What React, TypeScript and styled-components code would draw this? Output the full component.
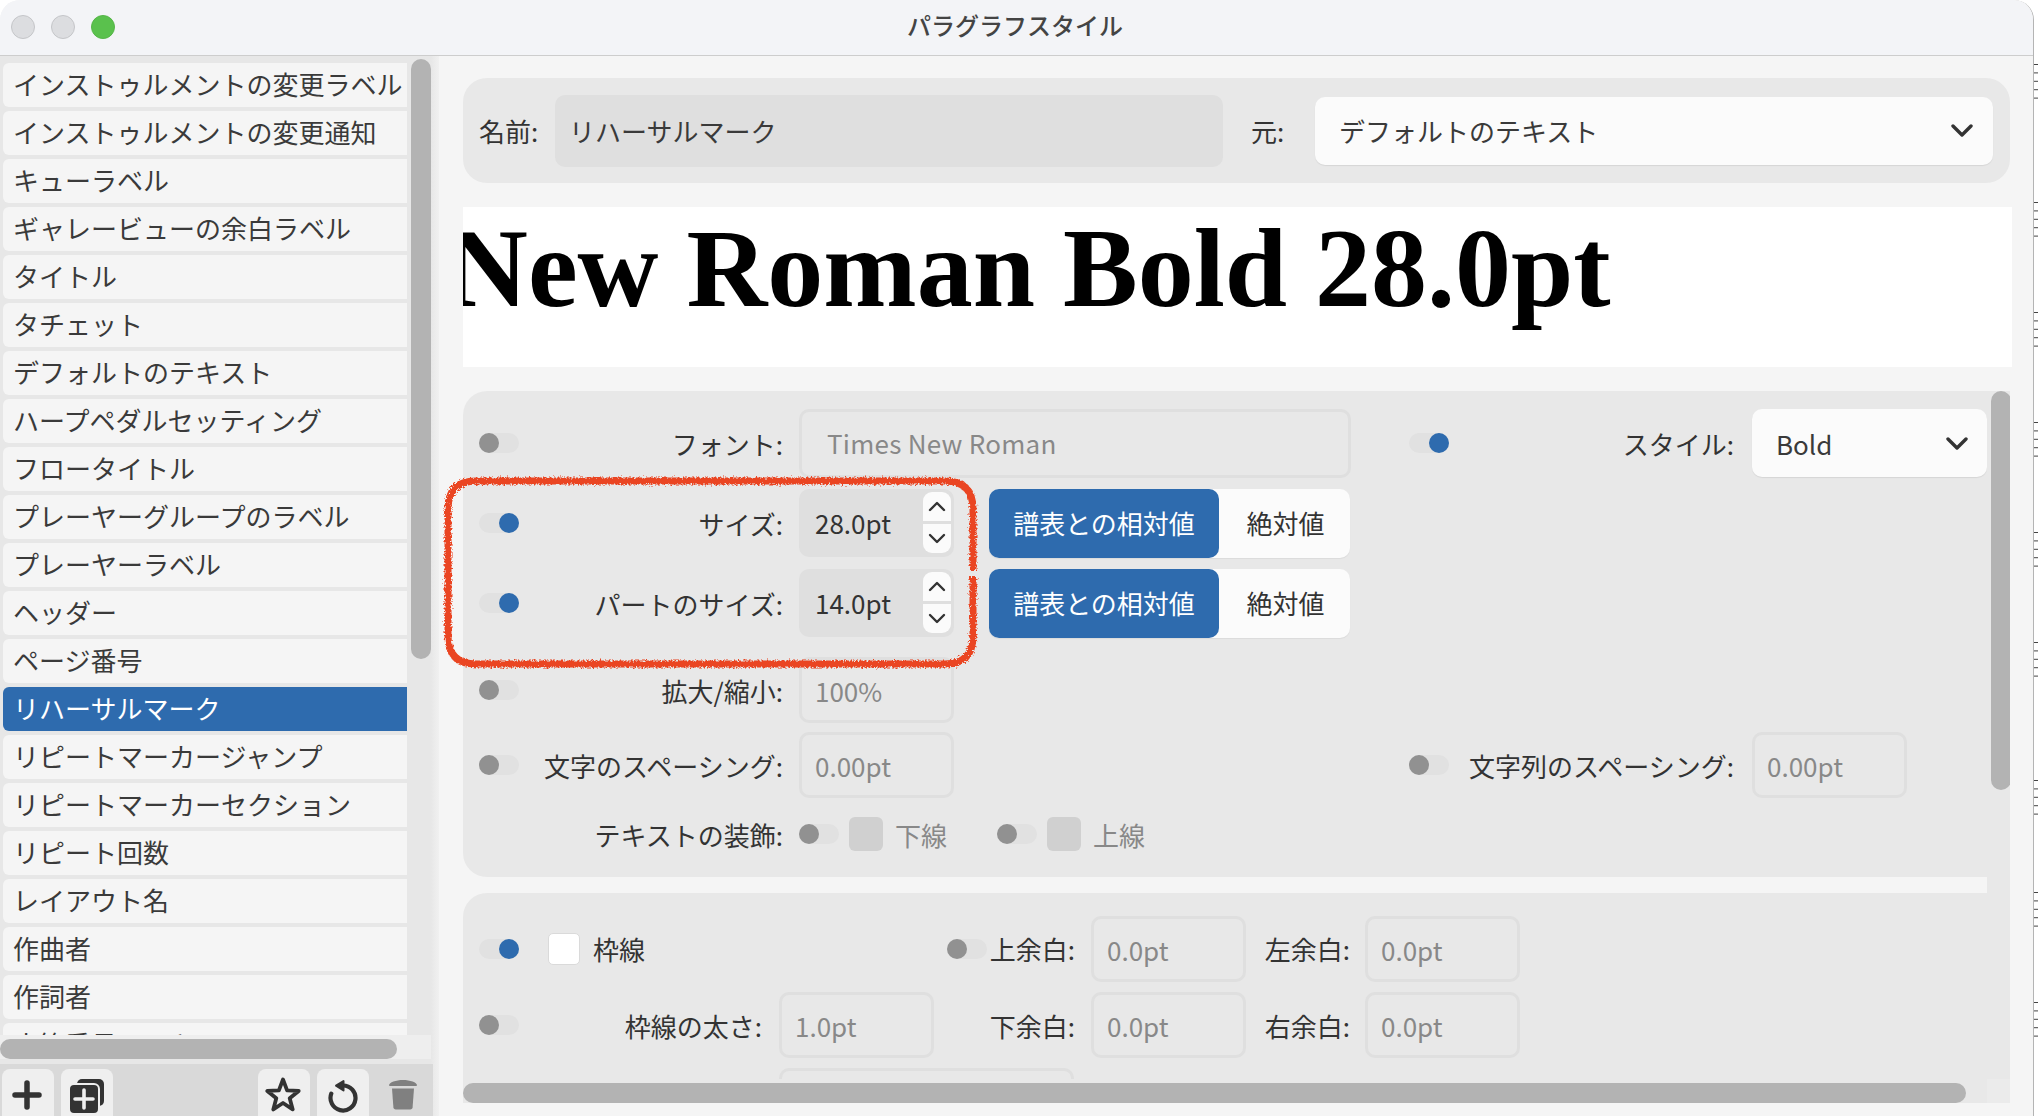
import React from "react";
import styled, { createGlobalStyle } from "styled-components";

const Global = createGlobalStyle`
  html, body { margin: 0; padding: 0; background: #fff; }
  body { font-family: "Noto Sans CJK JP", "Noto Sans", sans-serif; color: #333; }
  * { box-sizing: border-box; }
`;

const Page = styled.div`
  display: flex;
  width: 2038px;
  height: 1116px;
  overflow: hidden;
`;
const Win = styled.div`
  width: 2034px;
  height: 1116px;
  display: flex;
  flex-direction: column;
  border-radius: 20px 20px 0 0;
  border-right: 1px solid #b4b4b4;
  overflow: hidden;
  background: #f5f5f5;
`;
const StaffEdge = styled.svg`
  width: 4px;
  height: 1116px;
  flex: none;
`;
const TitleBar = styled.header`
  flex: none;
  height: 56px;
  display: grid;
  grid-template-columns: 1fr auto 1fr;
  align-items: center;
  padding: 0 0 2px 11px;
  background: #f3f4f7;
  border-bottom: 1px solid #cdcdcd;
`;
const Lights = styled.div`
  display: flex;
  gap: 16px;
`;
const Light = styled.span<{ $on?: boolean }>`
  width: 24px;
  height: 24px;
  border-radius: 50%;
  background: ${(p) => (p.$on ? "#5ac14d" : "#dcdde0")};
  border: 1px solid ${(p) => (p.$on ? "#55b548" : "#c4c5c8")};
`;
const Title = styled.h1`
  margin: 0;
  font-size: 24px;
  font-weight: 500;
  line-height: 30px;
  color: #444;
  transform: translate(-7px, -2px);
`;
const Body = styled.div`
  flex: 1;
  min-height: 0;
  display: flex;
  position: relative;
`;
const Sidebar = styled.aside`
  flex: none;
  width: 439px;
  display: flex;
  flex-direction: column;
  background: linear-gradient(90deg, #e7e7e7 0, #e7e7e7 431px, #ececec 435px, #f0f0f0 439px);
`;
const ListPane = styled.div`
  flex: none;
  height: 979px;
  width: 431px;
  display: flex;
  overflow: hidden;
`;
const List = styled.ul`
  list-style: none;
  margin: 0;
  padding: 7px 0 0 3px;
  width: 407px;
  flex: none;
  overflow: hidden;
`;
const Item = styled.li<{ $active?: boolean }>`
  height: 44px;
  margin-bottom: 4px;
  padding-left: 10px;
  border-radius: 6px 0 0 6px;
  font-size: 26px;
  line-height: 42px;
  white-space: nowrap;
  color: ${(p) => (p.$active ? "#fff" : "#3a3a3a")};
  background: ${(p) => (p.$active ? "#2e6bae" : "#f5f5f5")};
`;
const VTrack = styled.div<{ $top: number; $width: number }>`
  flex: none;
  width: ${(p) => p.$width}px;
  padding-top: ${(p) => p.$top}px;
  margin-left: 4px;
`;
const VThumb = styled.div<{ $height: number }>`
  width: 20px;
  height: ${(p) => p.$height}px;
  border-radius: 10px;
  background: #b3b3b3;
`;
const HTrack = styled.div`
  flex: none;
  width: 431px;
  height: 24px;
  padding-top: 4px;
  background: #eeeeee;
`;
const HThumb = styled.div<{ $width: number }>`
  width: ${(p) => p.$width}px;
  height: 20px;
  border-radius: 10px;
  background: #b3b3b3;
`;
const Toolbar = styled.div`
  flex: none;
  margin-top: 5px;
  height: 52px;
  width: 433px;
  padding: 5px 5px 0 2px;
  display: flex;
  gap: 7px;
  background: #d9d9d9;
`;
const ToolButton = styled.button<{ $bare?: boolean; $dx?: number }>`
  width: 52px;
  height: 47px;
  padding: 8px ${(p) => Math.max(0, -(p.$dx ?? 0))}px 0 ${(p) => Math.max(0, p.$dx ?? 0)}px;
  margin: 0;
  border: 0;
  display: flex;
  justify-content: center;
  border-radius: 8px 8px 0 0;
  background: ${(p) => (p.$bare ? "transparent" : "#efefef")};
  color: ${(p) => (p.$bare ? "#808080" : "#333")};
`;
const Spacer = styled.div`
  flex: 1;
`;
const Main = styled.main`
  flex: 1;
  min-width: 0;
  display: flex;
  flex-direction: column;
  padding: 22px 23px 13px 24px;
  background: #f5f5f5;
`;
const HeadPanel = styled.section`
  flex: none;
  height: 105px;
  display: flex;
  align-items: center;
  padding: 0 17px 0 16px;
  border-radius: 24px;
  background: #e8e8e8;
  font-size: 26px;
`;
const HeadLabel = styled.span<{ $width: number; $inset?: number }>`
  flex: none;
  width: ${(p) => p.$width}px;
  padding-left: ${(p) => p.$inset ?? 0}px;
  white-space: nowrap;
`;
const NameField = styled.div`
  flex: none;
  width: 668px;
  height: 72px;
  padding-left: 14px;
  border-radius: 10px;
  background: #dfdfdf;
  line-height: 72px;
  color: #3a3a3a;
`;
const Select = styled.div<{ $width?: number; $height: number; $pad: number; $right: number }>`
  flex: ${(p) => (p.$width ? "none" : "1")};
  ${(p) => (p.$width ? `width: ${p.$width}px;` : "")}
  height: ${(p) => p.$height}px;
  display: flex;
  align-items: center;
  justify-content: space-between;
  padding: 0 ${(p) => p.$right}px 0 ${(p) => p.$pad}px;
  border-radius: 10px;
  background: #fbfbfb;
  box-shadow: 0 1px 1px rgba(0, 0, 0, 0.08);
  font-size: 26px;
  color: #3a3a3a;
`;
const Preview = styled.div`
  flex: none;
  width: 1549px;
  height: 160px;
  margin-top: 24px;
  overflow: hidden;
  background: #fff;
`;
const PreviewText = styled.div`
  margin-left: -16px;
  font-family: "Liberation Serif", serif;
  font-weight: 700;
  font-size: 112px;
  line-height: 122px;
  color: #000;
  white-space: nowrap;
`;
const ScrollArea = styled.div`
  flex: 1;
  min-height: 0;
  margin-top: 24px;
  display: grid;
  grid-template-columns: 1524px 24px;
  grid-template-rows: 688px 24px;
  background: #e8e8e8;
  border-radius: 24px 0 0 0;
  overflow: hidden;
`;
const Viewport = styled.div`
  overflow: hidden;
  background: #f5f5f5;
`;
const Panel = styled.section<{ $radius: string; $pad: string; $mb?: number }>`
  background: #e8e8e8;
  border-radius: ${(p) => p.$radius};
  padding: ${(p) => p.$pad};
  margin-bottom: ${(p) => p.$mb ?? 0}px;
  font-size: 26px;
`;
const FontRow = styled.div<{ $height: number; $gap?: number }>`
  display: grid;
  grid-template-columns: 40px 264px 626px 40px 285px 1fr;
  align-items: center;
  height: ${(p) => p.$height}px;
  margin-top: ${(p) => p.$gap ?? 0}px;
`;
const BoxRow = styled.div<{ $height: number; $gap?: number }>`
  display: grid;
  grid-template-columns: 40px 243px 172px 13px 40px 88px 171px 104px 170px;
  align-items: center;
  height: ${(p) => p.$height}px;
  margin-top: ${(p) => p.$gap ?? 0}px;
`;
const Slot = styled.div``;
const Label = styled.label`
  text-align: right;
  white-space: nowrap;
  color: #333;
`;
const Cell = styled.div<{ $inset: number; $span?: string }>`
  display: flex;
  align-items: center;
  padding-left: ${(p) => p.$inset}px;
  ${(p) => (p.$span ? `grid-column: ${p.$span};` : "")}
`;
const Track = styled.span`
  display: block;
  position: relative;
  flex: none;
  width: 40px;
  height: 20px;
  border-radius: 10px;
  background: #e1e1e1;
`;
const Thumb = styled.span<{ $on?: boolean }>`
  position: absolute;
  top: 0;
  left: ${(p) => (p.$on ? "20px" : "0")};
  width: 20px;
  height: 20px;
  border-radius: 50%;
  background: ${(p) => (p.$on ? "#2e6bae" : "#919191")};
`;
const DisabledInput = styled.div<{ $width: number; $height?: number; $pad?: number; $track?: number }>`
  flex: none;
  width: ${(p) => p.$width}px;
  height: ${(p) => p.$height ?? 66}px;
  padding-left: ${(p) => p.$pad ?? 13}px;
  border: 3px solid #dfdfdf;
  border-radius: 10px;
  font-size: 26px;
  line-height: 62px;
  letter-spacing: ${(p) => p.$track ?? 0}px;
  color: #888;
  white-space: nowrap;
`;
const Spin = styled.div`
  flex: none;
  position: relative;
  width: 155px;
  height: 68px;
  padding-left: 16px;
  border-radius: 10px;
  background: #dfdfdf;
  line-height: 68px;
  color: #333;
`;
const SpinButtons = styled.div`
  position: absolute;
  top: 3px;
  left: 124px;
  width: 28px;
  display: flex;
  flex-direction: column;
  gap: 3px;
`;
const SpinButton = styled.span<{ $down?: boolean }>`
  height: 29px;
  display: flex;
  align-items: center;
  justify-content: center;
  background: #fbfbfb;
  border-radius: ${(p) => (p.$down ? "0 0 9px 9px" : "9px 9px 0 0")};
`;
const Segmented = styled.div`
  flex: none;
  display: flex;
  width: 361px;
  height: 69px;
  margin-left: 35px;
  border-radius: 10px;
  background: #fbfbfb;
  box-shadow: 0 1px 1px rgba(0, 0, 0, 0.06);
`;
const Segment = styled.span<{ $on?: boolean }>`
  display: block;
  width: ${(p) => (p.$on ? "230px" : "131px")};
  padding-left: ${(p) => (p.$on ? "0" : "2px")};
  text-align: center;
  line-height: 67px;
  border-radius: 10px;
  background: ${(p) => (p.$on ? "#2e6bae" : "transparent")};
  color: ${(p) => (p.$on ? "#fff" : "#333")};
`;
const Deco = styled.div`
  flex: none;
  width: 198px;
  display: flex;
  align-items: center;
`;
const DecoBox = styled.span`
  flex: none;
  width: 34px;
  height: 34px;
  margin: 0 12px 0 10px;
  border-radius: 6px;
  background: #d0d0d0;
`;
const DecoText = styled.span`
  color: #888;
`;
const BorderToggle = styled.div`
  grid-column: 2 / 4;
  display: flex;
  align-items: center;
  padding-left: 29px;
`;
const CheckBox = styled.span`
  flex: none;
  width: 32px;
  height: 32px;
  margin-right: 13px;
  border-radius: 5px;
  background: #fff;
  border: 1px solid #dadada;
`;
const HBarZone = styled.div`
  padding-top: 4px;
`;
const Corner = styled.div`
  background: #ebebeb;
`;
const VZone = styled.div`
  padding-left: 4px;
`;
const Scribble = styled.svg`
  position: absolute;
  left: 440px;
  top: 414px;
  width: 545px;
  height: 205px;
  pointer-events: none;
`;

const names = [
  "インストゥルメントの変更ラベル",
  "インストゥルメントの変更通知",
  "キューラベル",
  "ギャレービューの余白ラベル",
  "タイトル",
  "タチェット",
  "デフォルトのテキスト",
  "ハープペダルセッティング",
  "フロータイトル",
  "プレーヤーグループのラベル",
  "プレーヤーラベル",
  "ヘッダー",
  "ページ番号",
  "リハーサルマーク",
  "リピートマーカージャンプ",
  "リピートマーカーセクション",
  "リピート回数",
  "レイアウト名",
  "作曲者",
  "作詞者",
  "小節番号のテキスト",
];

const staffGroups = [64, 202, 312, 422, 532, 642, 780, 892, 1002];

const Toggle = ({ on }: { on?: boolean }) => (
  <Track>
    <Thumb $on={on} />
  </Track>
);

const Chevron = ({ w = 22, h = 13, sw = 3.4 }: { w?: number; h?: number; sw?: number }) => (
  <svg width={w} height={h} viewBox="0 0 22 13" fill="none" stroke="#333" strokeWidth={sw} strokeLinecap="round" strokeLinejoin="round">
    <polyline points="2,2 11,11 20,2" />
  </svg>
);

const SmallChevron = ({ up }: { up?: boolean }) => (
  <svg width="18" height="11" viewBox="0 0 18 11" fill="none" stroke="#333" strokeWidth="2.4" strokeLinecap="round" strokeLinejoin="round">
    <polyline points={up ? "2,9 9,2 16,9" : "2,2 9,9 16,2"} />
  </svg>
);

const SpinField = ({ value }: { value: string }) => (
  <Spin>
    {value}
    <SpinButtons>
      <SpinButton>
        <SmallChevron up />
      </SpinButton>
      <SpinButton $down>
        <SmallChevron />
      </SpinButton>
    </SpinButtons>
  </Spin>
);

const Relative = () => (
  <Segmented>
    <Segment $on>譜表との相対値</Segment>
    <Segment>絶対値</Segment>
  </Segmented>
);

const PlusIcon = () => (
  <svg width="36" height="36" viewBox="0 0 36 36" fill="none" stroke="currentColor" strokeWidth="5.5" strokeLinecap="round">
    <path d="M6 18H30M18 6V30" />
  </svg>
);
const CopyIcon = () => (
  <svg width="36" height="36" viewBox="0 0 36 36">
    <rect x="8" y="2" width="27" height="27" rx="5" fill="#333" />
    <rect x="0" y="7" width="30" height="30" rx="5" fill="#333" stroke="#efefef" strokeWidth="2" />
    <path d="M6 22H24M15 13V31" stroke="#efefef" strokeWidth="3.6" strokeLinecap="round" />
  </svg>
);
const StarIcon = () => (
  <svg width="36" height="36" viewBox="0 0 36 36" fill="none" stroke="currentColor" strokeWidth="3.8" strokeLinejoin="round">
    <polygon points="18,2.5 22.1,13.3 33.7,13.9 24.7,21.2 27.7,32.4 18,26 8.3,32.4 11.3,21.2 2.3,13.9 13.9,13.3" />
  </svg>
);
const ResetIcon = () => (
  <svg width="36" height="36" viewBox="0 0 36 36" fill="none" stroke="currentColor">
    <path d="M18 8.5A12.5 12.5 0 1 1 6.3 16.6" strokeWidth="4.2" strokeLinecap="round" />
    <polygon points="18.5,4 18.5,13.5 11,8.7" fill="currentColor" strokeWidth="2" strokeLinejoin="round" />
  </svg>
);
const TrashIcon = () => (
  <svg width="36" height="36" viewBox="0 0 36 36" fill="currentColor">
    <path d="M4 8.2C4 5.5 11 3 18 3s14 2.5 14 5.2c0 .5-.4.8-1 .8H5c-.6 0-1-.3-1-.8Z" />
    <path d="M7 11.5h22l-1.4 18.8c-.1 1.3-1 2.2-2.3 2.2H10.7c-1.3 0-2.2-.9-2.3-2.2L7 11.5Z" />
  </svg>
);

export default function App() {
  return (
    <Page>
      <Global />
      <Win>
        <TitleBar>
          <Lights>
            <Light />
            <Light />
            <Light $on />
          </Lights>
          <Title>パラグラフスタイル</Title>
        </TitleBar>
        <Body>
          <Sidebar>
            <ListPane>
              <List>
                {names.map((n) => (
                  <Item key={n} $active={n === "リハーサルマーク"}>
                    {n}
                  </Item>
                ))}
              </List>
              <VTrack $top={3} $width={20}>
                <VThumb $height={600} />
              </VTrack>
            </ListPane>
            <HTrack>
              <HThumb $width={397} />
            </HTrack>
            <Toolbar>
              <ToolButton $dx={-2} aria-label="add"><PlusIcon /></ToolButton>
              <ToolButton aria-label="duplicate"><CopyIcon /></ToolButton>
              <Spacer />
              <ToolButton $dx={-2} aria-label="favorite"><StarIcon /></ToolButton>
              <ToolButton aria-label="reset"><ResetIcon /></ToolButton>
              <ToolButton $bare $dx={2} aria-label="delete"><TrashIcon /></ToolButton>
            </Toolbar>
          </Sidebar>
          <Main>
            <HeadPanel>
              <HeadLabel $width={76}>名前:</HeadLabel>
              <NameField>リハーサルマーク</NameField>
              <HeadLabel $width={92} $inset={28}>元:</HeadLabel>
              <Select $height={68} $pad={24} $right={20}>
                デフォルトのテキスト
                <Chevron />
              </Select>
            </HeadPanel>
            <Preview>
              <PreviewText>New Roman Bold 28.0pt</PreviewText>
            </Preview>
            <ScrollArea>
              <Viewport>
                <Panel $radius="24px 0 0 24px" $pad="17px 0 24px 16px" $mb={16}>
                  <FontRow $height={70}>
                    <Toggle />
                    <Label>フォント:</Label>
                    <Cell $inset={16}>
                      <DisabledInput $width={552} $height={69} $pad={25} $track={0.25}>Times New Roman</DisabledInput>
                    </Cell>
                    <Toggle on />
                    <Label>スタイル:</Label>
                    <Cell $inset={18}>
                      <Select $width={235} $height={68} $pad={24} $right={19}>
                        Bold
                        <Chevron />
                      </Select>
                    </Cell>
                  </FontRow>
                  <FontRow $height={70} $gap={10}>
                    <Toggle on />
                    <Label>サイズ:</Label>
                    <Cell $inset={16}>
                      <SpinField value="28.0pt" />
                      <Relative />
                    </Cell>
                  </FontRow>
                  <FontRow $height={70} $gap={10}>
                    <Toggle on />
                    <Label>パートのサイズ:</Label>
                    <Cell $inset={16}>
                      <SpinField value="14.0pt" />
                      <Relative />
                    </Cell>
                  </FontRow>
                  <FontRow $height={68} $gap={18}>
                    <Toggle />
                    <Label>拡大/縮小:</Label>
                    <Cell $inset={16}>
                      <DisabledInput $width={155}>100%</DisabledInput>
                    </Cell>
                  </FontRow>
                  <FontRow $height={66} $gap={8}>
                    <Toggle />
                    <Label>文字のスペーシング:</Label>
                    <Cell $inset={16}>
                      <DisabledInput $width={155}>0.00pt</DisabledInput>
                    </Cell>
                    <Toggle />
                    <Label>文字列のスペーシング:</Label>
                    <Cell $inset={18}>
                      <DisabledInput $width={155} $pad={12}>0.00pt</DisabledInput>
                    </Cell>
                  </FontRow>
                  <FontRow $height={38} $gap={17}>
                    <Slot />
                    <Label>テキストの装飾:</Label>
                    <Cell $inset={16}>
                      <Deco>
                        <Toggle />
                        <DecoBox />
                        <DecoText>下線</DecoText>
                      </Deco>
                      <Deco>
                        <Toggle />
                        <DecoBox />
                        <DecoText>上線</DecoText>
                      </Deco>
                    </Cell>
                  </FontRow>
                </Panel>
                <Panel $radius="24px 0 0 0" $pad="22px 0 0 16px">
                  <BoxRow $height={67}>
                    <Toggle on />
                    <BorderToggle>
                      <CheckBox />
                      枠線
                    </BorderToggle>
                    <Slot />
                    <Toggle />
                    <Label>上余白:</Label>
                    <Cell $inset={16}>
                      <DisabledInput $width={155}>0.0pt</DisabledInput>
                    </Cell>
                    <Label>左余白:</Label>
                    <Cell $inset={15}>
                      <DisabledInput $width={155}>0.0pt</DisabledInput>
                    </Cell>
                  </BoxRow>
                  <BoxRow $height={66} $gap={10}>
                    <Toggle />
                    <Label>枠線の太さ:</Label>
                    <Cell $inset={17}>
                      <DisabledInput $width={155}>1.0pt</DisabledInput>
                    </Cell>
                    <Slot />
                    <Slot />
                    <Label>下余白:</Label>
                    <Cell $inset={16}>
                      <DisabledInput $width={155}>0.0pt</DisabledInput>
                    </Cell>
                    <Label>右余白:</Label>
                    <Cell $inset={15}>
                      <DisabledInput $width={155}>0.0pt</DisabledInput>
                    </Cell>
                  </BoxRow>
                  <BoxRow $height={66} $gap={10}>
                    <Slot />
                    <Slot />
                    <Cell $inset={17} $span="3 / 7">
                      <DisabledInput $width={295} />
                    </Cell>
                  </BoxRow>
                </Panel>
              </Viewport>
              <VZone>
                <VThumb $height={399} />
              </VZone>
              <HBarZone>
                <HThumb $width={1503} />
              </HBarZone>
              <Corner />
            </ScrollArea>
          </Main>
          <Scribble viewBox="0 0 545 205">
            <defs>
              <filter id="rough" x="-5%" y="-10%" width="110%" height="120%">
                <feTurbulence type="fractalNoise" baseFrequency="0.55" numOctaves="3" seed="4" />
                <feDisplacementMap in="SourceGraphic" scale="6" />
              </filter>
            </defs>
            <path
              d="M533 106V166Q533 194 505 194H36Q8 194 8 166V39Q8 11 36 11H505Q533 11 533 39V100"
              fill="none"
              stroke="#ea4520"
              strokeWidth="7"
              filter="url(#rough)"
            />
          </Scribble>
        </Body>
      </Win>
      <StaffEdge viewBox="0 0 4 1116">
        {staffGroups.map((y) =>
          [0, 1, 2, 3, 4].map((i) => (
            <rect key={`${y}-${i}`} x="0" y={y + i * 8.4} width="4" height="1" fill="#444" />
          ))
        )}
      </StaffEdge>
    </Page>
  );
}
